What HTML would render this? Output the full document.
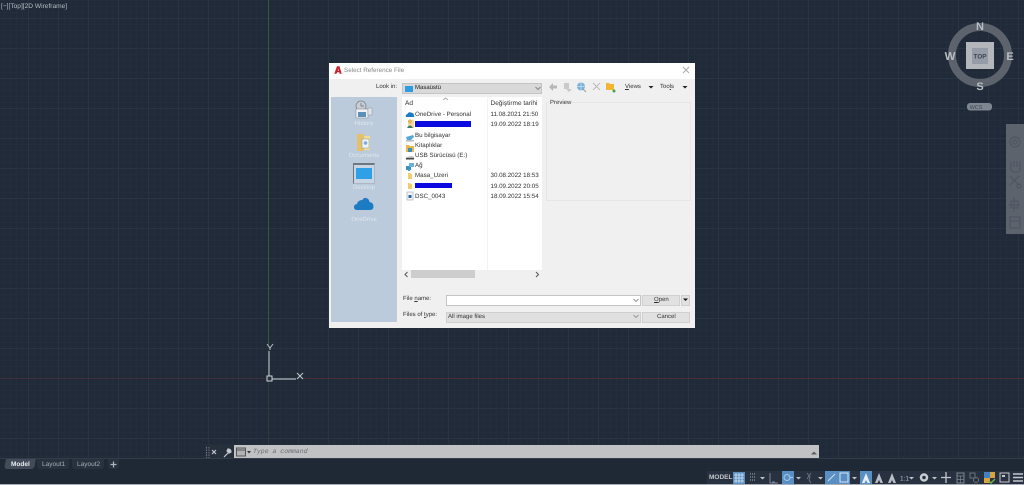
<!DOCTYPE html>
<html><head><meta charset="utf-8"><style>
html,body{margin:0;padding:0}
body{width:1024px;height:485px;overflow:hidden;position:relative;background:#202a38;font-family:"Liberation Sans",sans-serif;text-rendering:geometricPrecision}
#w{position:absolute;left:0;top:0;width:1024px;height:485px;filter:blur(.3px)}
.a{position:absolute}
.t{position:absolute;white-space:nowrap;font-size:6.2px;color:#333;line-height:9px}
#grid{position:absolute;left:0;top:0;width:1024px;height:458px;
background-image:linear-gradient(to right,#293442 1px,transparent 1px),linear-gradient(to bottom,#293442 1px,transparent 1px),linear-gradient(to right,#232d3b 1px,transparent 1px),linear-gradient(to bottom,#232d3b 1px,transparent 1px);
background-size:30px 30px,30px 30px,6px 6px,6px 6px;background-position:-2px 18px,-2px 18px,-2px 18px,-2px 18px}
.l{color:#dde5ee;font-size:6px;text-align:center;position:absolute;left:331px;width:66px}
</style></head><body><div id="w">
<div id="grid"></div>
<div class="a" style="left:268px;top:0;width:1px;height:345px;background:#2f5a3e"></div>
<div class="a" style="left:268px;top:378px;width:1px;height:80px;background:#2b3a3a"></div>
<div class="a" style="left:305px;top:378px;width:719px;height:1px;background:#4a2f3a"></div>
<div class="a" style="left:0;top:378px;width:265px;height:1px;background:#3f2f3c"></div>
<div class="t" style="left:1px;top:2px;color:#b4bcc6;font-size:6.6px">[−][Top][2D Wireframe]</div>

<svg class="a" style="left:250px;top:335px" width="70" height="55">
<path d="M19 16V41M22 44H46" stroke="#b0b6bc" stroke-width="1.2" fill="none"/>
<rect x="17" y="41" width="5" height="5" fill="none" stroke="#d0d4d8" stroke-width="1"/>
<path d="M20 9l3 4 3-4M23 13v2" transform="translate(-3 0)" stroke="#b8bec4" fill="none"/>
<path d="M47 38l6 6M53 38l-6 6" stroke="#c8ccd0" fill="none"/>
</svg>

<!-- compass -->
<svg class="a" style="left:940px;top:15px" width="84" height="105">
<circle cx="40" cy="40" r="28" fill="none" stroke="#5c636d" stroke-width="8"/>
<rect x="26" y="27" width="28" height="27" fill="#b3b7bb"/>
<rect x="32" y="33" width="16" height="16" fill="#959ca7"/>
<text x="40" y="43.500" font-size="6.500" font-weight="bold" fill="#3e4653" text-anchor="middle" font-family="Liberation Sans">TOP</text>
<g font-family="Liberation Sans" font-weight="bold" font-size="11" fill="#b9bec4" text-anchor="middle">
<text x="40" y="15">N</text><text x="40" y="75">S</text><text x="70" y="45">E</text><text x="10" y="45" font-size="11.500">W</text></g>
<rect x="27" y="88" width="25" height="7.500" rx="3" fill="#7d8691"/>
<text x="36" y="94" font-size="5.500" fill="#3e4653" text-anchor="middle" font-family="Liberation Sans">WCS</text>
</svg>

<!-- nav bar -->
<div class="a" style="left:1006px;top:124px;width:18px;height:110px;background:#5c636d"></div>
<svg class="a" style="left:1006px;top:124px" width="18" height="110">
<g fill="none" stroke="#4e5661" stroke-width="1.200">
<circle cx="9" cy="18" r="5"/><circle cx="9" cy="18" r="2"/>
<path d="M5 38v6q0 4 4 4h2q3 0 3-4v-7M8 37v6M11 37v6"/>
<path d="M4 52l9 9M13 52l-9 9"/><circle cx="13" cy="62" r="2"/>
<path d="M8 73v15M3 81h11"/><rect x="5" y="77" width="7" height="7"/>
<rect x="4" y="93" width="10" height="11"/><path d="M4 97h10"/></g>
</svg>

<!-- dialog -->
<div class="a" style="left:329px;top:63px;width:366px;height:265px;background:#f0f0f0"></div>
<div class="a" style="left:329px;top:63px;width:366px;height:16px;background:#fff"></div>
<svg class="a" style="left:334px;top:66px" width="8" height="8"><path d="M0.300 7.700L3 0.300H5.500L7.700 7.700H5.600L5.300 6.200H3.200L2.500 7.700Z" fill="#c8222c"/><path d="M3.800 4.800H4.900L4.500 2.700Z" fill="#fff"/></svg>
<div class="t" style="left:344px;top:66px;color:#8a8a8a;font-size:6.300px">Select Reference File</div>
<svg class="a" style="left:682px;top:66px" width="9" height="9"><path d="M1 1l6 6M7 1l-6 6" stroke="#aaa" fill="none"/></svg>

<div class="t" style="left:376px;top:83px;font-size:6px">Look in:</div>
<div class="a" style="left:402px;top:83px;width:140px;height:11px;background:#d9d9d9;border:1px solid #c4c4c4;box-sizing:border-box"></div>
<div class="a" style="left:405px;top:86px;width:8px;height:6px;background:#2f9be0"></div>
<div class="t" style="left:415px;top:83.500px;font-size:6px;color:#222">Masaüstü</div>
<svg class="a" style="left:535px;top:86px" width="6" height="5"><path d="M0.500 1l2.500 2.500L5.500 1" stroke="#888" fill="none"/></svg>

<!-- toolbar -->
<svg class="a" style="left:547px;top:81px" width="72" height="12">
<path d="M2 6l4-4v2.500h4v3H6V10Z" fill="#b8b8b8"/>
<path d="M17 2h5v6h3l-3 3-3-3h-2Z" fill="#cacaca"/>
<circle cx="34" cy="5.500" r="4" fill="#7bb0d8"/><path d="M30 5.500h8M34 1.500v8" stroke="#cfe0ee" stroke-width=".7"/><path d="M36 8l3 3" stroke="#999"/>
<path d="M46 2l7 7M53 2l-7 7" stroke="#bbb" fill="none"/>
<path d="M59 2h3l1 1h4v6h-8Z" fill="#f3b531"/><circle cx="67" cy="10" r="1.500" fill="#4aa04a"/>
</svg>
<div class="t" style="left:625px;top:83px;font-size:6px"><u>V</u>iews</div>
<div class="t" style="left:660px;top:83px;font-size:6px">Too<u>l</u>s</div>
<svg class="a" style="left:648px;top:85px" width="40" height="5"><path d="M.500 1h5L3 3.500ZM34.500 1h5L37 3.500Z" fill="#222"/></svg>

<!-- sidebar -->
<div class="a" style="left:331px;top:97px;width:66px;height:225px;background:#bccbdb"></div>
<svg class="a" style="left:353px;top:100px" width="22" height="20">
<circle cx="8" cy="6" r="5" fill="#c9ced4" stroke="#8a929b"/><path d="M8 3v3h3" stroke="#667" fill="none" stroke-width=".7"/>
<rect x="3" y="9" width="12" height="9" fill="#eef2f5" stroke="#8a929b" stroke-width=".6"/><rect x="5" y="12" width="8" height="5" fill="#5b8fb8"/>
<rect x="15" y="8" width="4" height="7" fill="#dfe5ea" stroke="#8a929b" stroke-width=".5"/></svg>
<div class="l" style="top:121px">History</div>
<svg class="a" style="left:356px;top:133px" width="16" height="19">
<path d="M1 1h7l0 17H1Z" fill="#e5c06a"/><path d="M8 3h6v14H8Z" fill="#f2dc9a"/><rect x="6" y="6" width="7" height="9" fill="#eef3f7" stroke="#7c96ad" stroke-width=".5"/><circle cx="9.500" cy="10" r="1.800" fill="#7ab0d8"/></svg>
<div class="l" style="top:153px">Documents</div>
<div class="a" style="left:353px;top:163px;width:22px;height:21px;border:1px solid #6e7680;border-top-width:2px;border-right-color:#aeb8c4;border-bottom-color:#aeb8c4;box-sizing:border-box;background:#c8d5e2"></div>
<div class="a" style="left:356px;top:168px;width:16px;height:11px;background:#2f9fe6"></div>
<div class="l" style="top:185px">Desktop</div>
<svg class="a" style="left:354px;top:197px" width="20" height="15"><path d="M3 13Q0 13 0 10Q0 7.500 3 7Q4 3 8.500 3Q9.500 0.500 12 1Q15 1.500 15.500 5Q19.500 5.500 19.500 9.500Q19.500 13 16 13Z" fill="#1b7cc4"/></svg>
<div class="l" style="top:217px">OneDrive</div>

<!-- list -->
<div class="a" style="left:402px;top:97px;width:140px;height:173px;background:#fff"></div>
<div class="a" style="left:487px;top:97px;width:1px;height:173px;background:#f3f3f3"></div>
<svg class="a" style="left:442px;top:97px" width="7" height="4"><path d="M1 3l2.500-2L6 3" stroke="#aaa" fill="none"/></svg>
<div class="t" style="left:405px;top:99px;font-size:6.500px">Ad</div>
<div class="t" style="left:490.500px;top:99px;font-size:6.500px">Değiştirme tarihi</div>

<svg class="a" style="left:405px;top:108px" width="10" height="94">
<path d="M1 9Q0 6.500 2.500 6Q3.500 3.500 6 4.500Q9 5 9 7.500Q10 9 8.500 9Z" fill="#1b7cc4"/>
<circle cx="5" cy="13.500" r="2" fill="#d9a86a"/><rect x="3" y="12" width="6" height="8" fill="#e9c05f" opacity=".6"/><path d="M2 20q3-5 6 0Z" fill="#3e7a6a"/>
<path d="M1 29l7-2 1 2-3 3H2Z" fill="#58a9d8"/><rect x="1" y="32" width="8" height="1.500" fill="#b5bcc2"/>
<path d="M1 37h3l1 1h4v6H1Z" fill="#e8b84d"/><rect x="3" y="40" width="4" height="4" fill="#3a8fc0"/>
<path d="M1 49l6-1 2 1v2H2Z" fill="#b6bbc0"/><rect x="1" y="50" width="8" height="1.500" fill="#444"/>
<rect x="1" y="58" width="5" height="4" fill="#3a8fc0"/><rect x="4" y="55" width="5" height="4" fill="#6eb0dc"/><rect x="3" y="61" width="2" height="2" fill="#4f9bcc"/>
<path d="M3 65h2l1 1h1v5H3Z" fill="#f0cd6c"/>
<path d="M3 75h2l1 1h1v5H3Z" fill="#f0cd6c"/>
<rect x="2" y="84" width="6" height="8" fill="#f4f6f8" stroke="#9aa4ad" stroke-width=".6"/><rect x="3.500" y="87" width="3" height="3" fill="#2a68a5"/>
</svg>

<div class="t" style="left:415px;top:110px">OneDrive - Personal</div>
<div class="t" style="left:490.500px;top:110px">11.08.2021 21:50</div>
<div class="a" style="left:415px;top:121px;width:56px;height:6px;background:#0a0ae0"></div>
<div class="t" style="left:490.500px;top:120px">19.09.2022 18:19</div>
<div class="t" style="left:415px;top:130.500px">Bu bilgisayar</div>
<div class="t" style="left:415px;top:140.500px">Kitaplıklar</div>
<div class="t" style="left:415px;top:150.500px">USB Sürücüsü (E:)</div>
<div class="t" style="left:415px;top:161px">Ağ</div>
<div class="t" style="left:415px;top:171px">Masa_Uzeri</div>
<div class="t" style="left:490.500px;top:171px">30.08.2022 18:53</div>
<div class="a" style="left:415px;top:183px;width:37px;height:5px;background:#0a0ae0"></div>
<div class="t" style="left:490.500px;top:181.500px">19.09.2022 20:05</div>
<div class="t" style="left:415px;top:192px">DSC_0043</div>
<div class="t" style="left:490.500px;top:192px">18.09.2022 15:54</div>

<!-- scrollbar -->
<div class="a" style="left:402px;top:270px;width:140px;height:10px;background:#f0f0f0"></div>
<div class="a" style="left:411px;top:270px;width:64px;height:8px;background:#cdcdcd"></div>
<svg class="a" style="left:404px;top:271px" width="136" height="7"><path d="M3.500 1L1 3.500 3.500 6M132 1l2.500 2.500L132 6" stroke="#555" fill="none"/></svg>

<!-- preview -->
<div class="a" style="left:546px;top:102px;width:145px;height:99px;border:1px solid #e6e6e6;box-sizing:border-box"></div>
<div class="t" style="left:549px;top:98.500px;background:#f0f0f0;padding:0 1px;font-size:6px">Preview</div>

<!-- bottom -->
<div class="t" style="left:403px;top:295px;font-size:6px">File <u>n</u>ame:</div>
<div class="t" style="left:403px;top:311px;font-size:6px">Files of <u>t</u>ype:</div>
<div class="a" style="left:446px;top:295px;width:195px;height:11px;background:#fff;border:1px solid #c4c4c4;box-sizing:border-box"></div>
<div class="a" style="left:446px;top:312px;width:195px;height:10.500px;background:#e0e0e0;border:1px solid #d0d0d0;box-sizing:border-box"></div>
<div class="t" style="left:448px;top:312.500px;font-size:6px">All image files</div>
<svg class="a" style="left:633px;top:298px" width="6" height="21"><path d="M0.500 1l2.500 2.500L5.500 1M0.500 17l2.500 2.500L5.500 17" stroke="#999" fill="none"/></svg>
<div class="a" style="left:642px;top:295px;width:38px;height:11px;background:#e1e1e1;border:1px solid #d0d0d0;box-sizing:border-box"></div>
<div class="t" style="left:654px;top:296px;font-size:6px"><u>O</u>pen</div>
<div class="a" style="left:681px;top:295px;width:9px;height:11px;background:#e1e1e1;border:1px solid #d0d0d0;box-sizing:border-box"></div>
<svg class="a" style="left:683px;top:298px" width="5" height="4"><path d="M0 .500h5L2.500 3Z" fill="#111"/></svg>
<div class="a" style="left:642px;top:312px;width:48px;height:11px;background:#e1e1e1;border:1px solid #d0d0d0;box-sizing:border-box"></div>
<div class="t" style="left:657px;top:313px;font-size:6px">Cancel</div>

<!-- command line -->
<div class="a" style="left:205px;top:445px;width:29px;height:14px;background:#262f3c"></div>
<svg class="a" style="left:205px;top:445px" width="30" height="15">
<path d="M1.500 2v11M4 2v11" stroke="#6d7580" stroke-dasharray="1.500 1"/>
<path d="M7 5l4 4M11 5l-4 4" stroke="#c4c8cc" stroke-width="1.200"/>
<path d="M19 12l5-5M23 4l-1 2 2 2 2-1q0-3-3-3Z" stroke="#c4c8cc" stroke-width="1.200" fill="#c4c8cc"/>
</svg>
<div class="a" style="left:234px;top:445px;width:585px;height:13.500px;background:#c1c2c3"></div>
<svg class="a" style="left:236px;top:447px" width="16" height="10"><rect x=".5" y="1" width="9" height="8" fill="#b0b2b4" stroke="#555"/><path d="M1 3h8" stroke="#555"/><path d="M11 4h4l-2 2.500Z" fill="#333"/></svg>
<div class="t" style="left:253px;top:448px;font:italic 6.500px 'Liberation Mono',monospace;color:#6a6c70">Type a command</div>
<svg class="a" style="left:811px;top:451px" width="6" height="4"><path d="M0 3.500L3 .500 6 3.500Z" fill="#5a5c60"/></svg>

<!-- tabs -->
<div class="a" style="left:0;top:459px;width:1024px;height:26px;background:#1f2936"></div>
<div class="a" style="left:0;top:458px;width:1024px;height:1px;background:#333d4a"></div>
<div class="a" style="left:5px;top:459px;width:30px;height:10px;background:#414b59;border-radius:0 0 3px 3px;transform:skewX(-10deg)"></div>
<div class="t" style="left:11px;top:460px;color:#e8ebee;font-weight:bold;font-size:6.500px">Model</div>
<div class="a" style="left:37px;top:459px;width:32px;height:10px;background:#28323f;border-radius:0 0 3px 3px"></div>
<div class="t" style="left:42px;top:460px;color:#a4acb5;font-size:6.500px">Layout1</div>
<div class="a" style="left:72px;top:459px;width:32px;height:10px;background:#28323f;border-radius:0 0 3px 3px"></div>
<div class="t" style="left:77px;top:460px;color:#a4acb5;font-size:6.500px">Layout2</div>
<div class="a" style="left:108px;top:459px;width:11px;height:10px;background:#28323f;border-radius:0 0 3px 3px"></div>
<svg class="a" style="left:110px;top:461px" width="7" height="7"><path d="M3.500 .500v6M.500 3.500h6" stroke="#b0b6bd" stroke-width="1.200"/></svg>

<!-- status bar -->
<div class="a" style="left:707px;top:471px;width:317px;height:13px;background:#27313f"></div>
<div class="a" style="left:0;top:484px;width:1024px;height:1px;background:#aab0b6"></div>
<div class="t" style="left:709px;top:473px;color:#c2c7cd;font-weight:bold;font-size:6.500px">MODEL</div>
<svg class="a" style="left:700px;top:465px" width="324" height="20">
<rect x="33" y="7" width="12" height="12" fill="#5a8fc4"/>
<path d="M36 8v10M39 8v10M42 8v10M34 10h10M34 13h10M34 16h10" stroke="#dbe7f2" stroke-width=".8"/>
<path d="M50 9h6M50 12h6M50 15h6" stroke="#aab0b7" stroke-dasharray="1 1"/>
<path d="M60 12h5l-2.500 2.500Z" fill="#c0c5cb"/>
<path d="M70 8v10h8M72 17h3" stroke="#7d8691" fill="none"/>
<rect x="82" y="6" width="12" height="13" fill="#5a8fc4"/>
<circle cx="87" cy="12.500" r="3" fill="none" stroke="#a8c8e4"/><path d="M90 12.500h3" stroke="#a8c8e4"/>
<path d="M96 12h5l-2.500 2.500Z" fill="#c0c5cb"/>
<path d="M107 8l3 4-1 3 2 3M111 8l-4 6" stroke="#6a727c" fill="none"/>
<path d="M118 12h5l-2.500 2.500Z" fill="#c0c5cb"/>
<rect x="125" y="6" width="13" height="13" fill="#5a8fc4"/><path d="M128 16l7-7" stroke="#cfe0ee"/>
<rect x="138" y="6" width="12" height="13" fill="#5a8fc4"/><rect x="140" y="8" width="8" height="9" fill="none" stroke="#d5e4f1"/>
<path d="M152 12h5l-2.500 2.500Z" fill="#c0c5cb"/>
<rect x="160" y="6" width="12" height="13" fill="#5a8fc4"/>
<path d="M166 8l-4 10h2.500l1.500-3 1.500 3H170Z" fill="#e8f0f7"/>
<path d="M179 8l-4 10h2.500l1.500-3 1.500 3h2.500Z" fill="#b8bec5"/>
<path d="M192 8l-4 10h2.500l1.500-3 1.500 3h2.500Z" fill="#b8bec5"/>
<text x="200" y="15.500" font-size="6.500" fill="#b4bac1" font-family="Liberation Sans">1:1</text>
<path d="M209 12h5l-2.500 2.500Z" fill="#c0c5cb"/>
<circle cx="224" cy="12.500" r="3" fill="none" stroke="#c8cdd2" stroke-width="2.500"/>
<path d="M232 12h5l-2.500 2.500Z" fill="#c0c5cb"/>
<path d="M246 7v11M241 12.500h10" stroke="#c4c9ce" stroke-width="1.300"/>
<rect x="257" y="8" width="7" height="10" fill="none" stroke="#7d8691"/><path d="M257 11h7M260.500 11v7M257 14.500h7" stroke="#7d8691" stroke-width=".7"/>
<rect x="270" y="8" width="5" height="5" fill="none" stroke="#6a727c"/><circle cx="276" cy="15" r="2.500" fill="none" stroke="#6a727c"/>
<rect x="284" y="7" width="6" height="6" fill="#3f82c5"/><rect x="290" y="7" width="5" height="6" fill="#d9a440"/><rect x="284" y="13" width="6" height="5" fill="#d9a440"/><path d="M289 16l2 2 4-4" stroke="#6ab04c" stroke-width="1.500" fill="none"/>
<rect x="300" y="8" width="9" height="9" fill="none" stroke="#c4c9ce"/><rect x="302" y="10" width="3" height="2" fill="#c4c9ce"/>
<path d="M313 9h10M313 12.500h10M313 16h10" stroke="#c4c9ce" stroke-width="1.400"/>
</svg>
</div></body></html>
